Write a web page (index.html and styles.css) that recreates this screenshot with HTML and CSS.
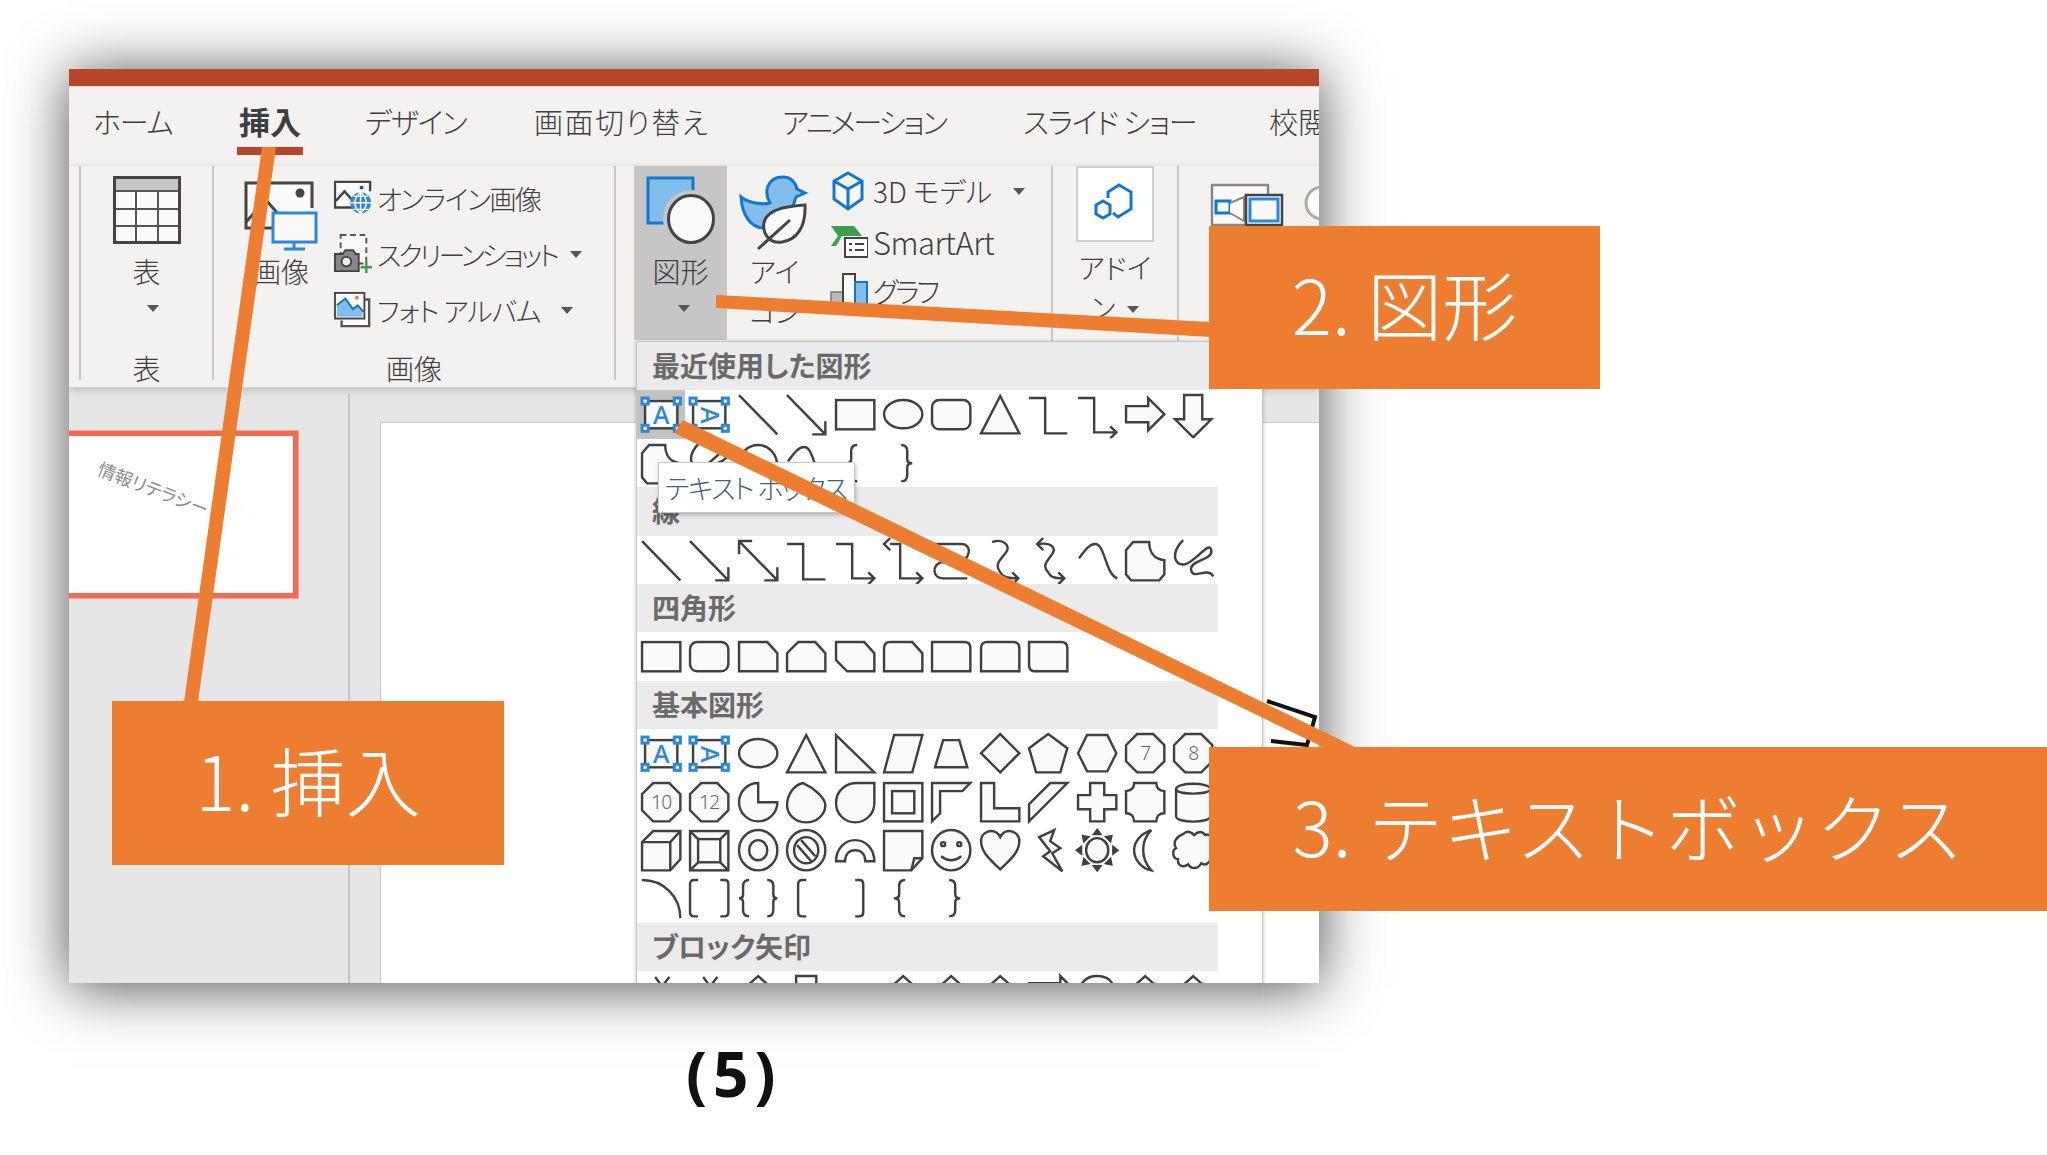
FILE: index.html
```html
<!DOCTYPE html>
<html lang="ja">
<head>
  <meta charset="UTF-8" />
  <title>図形 テキストボックス</title>
  <link rel="stylesheet" href="styles.css">
</head>

<body>
  <!-- shape gallery icons, reused below -->
  <svg class="defs" xmlns="http://www.w3.org/2000/svg">
    <symbol id="tb" viewBox="0 0 48 48">
      <rect x="8" y="11" width="32" height="27"/>
      <text x="24" y="34" text-anchor="middle" font-size="25" font-weight="500" fill="#2b88d8" stroke="none" font-family="Noto Sans">A</text>
      <g fill="#fff" stroke="#2b88d8" stroke-width="3"><rect x="5" y="8" width="6" height="6"/><rect x="37" y="8" width="6" height="6"/><rect x="5" y="35" width="6" height="6"/><rect x="37" y="35" width="6" height="6"/></g>
    </symbol>
    <symbol id="tbv" viewBox="0 0 48 48">
      <rect x="8" y="11" width="32" height="27"/>
      <text x="24" y="33" text-anchor="middle" font-size="25" font-weight="500" fill="#2b88d8" stroke="none" font-family="Noto Sans" transform="rotate(90 24 25)">A</text>
      <g fill="#fff" stroke="#2b88d8" stroke-width="3"><rect x="5" y="8" width="6" height="6"/><rect x="37" y="8" width="6" height="6"/><rect x="5" y="35" width="6" height="6"/><rect x="37" y="35" width="6" height="6"/></g>
    </symbol>
    <symbol id="line" viewBox="0 0 48 48"><path fill="none" d="M5 5L43 44"/></symbol>
    <symbol id="arrow" viewBox="0 0 48 48"><path fill="none" d="M5 5L43 44M43 31V44H30"/></symbol>
    <symbol id="arrow2" viewBox="0 0 48 48"><path fill="none" d="M5 5L43 44M43 31V44H30M5 18V5H18"/></symbol>
    <symbol id="rect" viewBox="0 0 48 48"><rect x="5" y="10" width="38" height="29"/></symbol>
    <symbol id="oval" viewBox="0 0 48 48"><ellipse cx="24" cy="24" rx="19" ry="14"/></symbol>
    <symbol id="round" viewBox="0 0 48 48"><rect x="5" y="10" width="38" height="29" rx="7"/></symbol>
    <symbol id="tri" viewBox="0 0 48 48"><path d="M24 6L43 43H5Z"/></symbol>
    <symbol id="rtri" viewBox="0 0 48 48"><path d="M5 6L43 43H5Z"/></symbol>
    <symbol id="elbow" viewBox="0 0 48 48"><path fill="none" d="M5 8H21V43H43"/></symbol>
    <symbol id="elbowa" viewBox="0 0 48 48"><path fill="none" d="M5 8H21V42H42M37 36L43 42L37 48"/></symbol>
    <symbol id="elbowb" viewBox="0 0 48 48"><path fill="none" d="M11 8H21V42H42M37 36L43 42L37 48M11 2L5 8L11 14"/></symbol>
    <symbol id="rarrow" viewBox="0 0 48 48"><path d="M5 16H27V8L43 24L27 40V32H5Z"/></symbol>
    <symbol id="darrow" viewBox="0 0 48 48"><path d="M15 5H33V29H42L24 47L6 29H15Z"/></symbol>
    <symbol id="free" viewBox="0 0 48 48"><path d="M12 6H28C28 16 33 23 43 24V38L38 44H10L5 38V14Z"/></symbol>
    <symbol id="scrib" viewBox="0 0 48 48"><path fill="none" d="M14 4C2 16 4 30 16 28C26 26 40 4 42 14C44 24 20 24 22 34C24 44 38 30 44 40"/></symbol>
    <symbol id="arcd" viewBox="0 0 48 48"><path fill="none" d="M5 44V24C5 14 14 6 24 6C34 6 43 14 43 28M5 44H30"/></symbol>
    <symbol id="bump" viewBox="0 0 48 48"><path fill="none" d="M6 22C12 14 16 8 22 8C32 8 32 38 44 42"/></symbol>
    <symbol id="conn" viewBox="0 0 48 48"><path fill="none" d="M6 8H34C44 8 44 20 34 26H14C4 30 6 42 16 42H40"/></symbol>
    <symbol id="conna" viewBox="0 0 48 48"><path fill="none" d="M16 6C28 2 34 10 30 16C24 24 18 28 24 36C26 40 30 42 42 42M36 36L42 42L36 48"/></symbol>
    <symbol id="connb" viewBox="0 0 48 48"><path fill="none" d="M14 8C28 6 32 12 28 18C22 26 18 30 24 36C26 40 28 42 40 42M34 36L40 42L34 48M19 2L13 8L19 14"/></symbol>
    <symbol id="snip1" viewBox="0 0 48 48"><path d="M5 10H33L43 21V39H5Z"/></symbol>
    <symbol id="snip2" viewBox="0 0 48 48"><path d="M16 10H33L43 21V39H5V21Z"/></symbol>
    <symbol id="snipd" viewBox="0 0 48 48"><path d="M5 10H33L43 21V39H16L5 28Z"/></symbol>
    <symbol id="snipr" viewBox="0 0 48 48"><path d="M11 10H33L43 21V39H5V16Q5 10 11 10Z"/></symbol>
    <symbol id="round1" viewBox="0 0 48 48"><path d="M5 10H37Q43 10 43 16V39H5Z"/></symbol>
    <symbol id="round2" viewBox="0 0 48 48"><path d="M11 10H37Q43 10 43 16V39H5V16Q5 10 11 10Z"/></symbol>
    <symbol id="roundd" viewBox="0 0 48 48"><path d="M5 10H37Q43 10 43 16V39H11Q5 39 5 33Z"/></symbol>
    <symbol id="para" viewBox="0 0 48 48"><path d="M15 6H43L33 43H5Z"/></symbol>
    <symbol id="trap" viewBox="0 0 48 48"><path d="M16 11H32L40 38H8Z"/></symbol>
    <symbol id="dia" viewBox="0 0 48 48"><path d="M24 5L43 24L24 43L5 24Z"/></symbol>
    <symbol id="pent" viewBox="0 0 48 48"><path d="M24 5L43 19L36 43H12L5 19Z"/></symbol>
    <symbol id="hex" viewBox="0 0 48 48"><path d="M14 6H34L43 24L34 42H14L5 24Z"/></symbol>
    <symbol id="oct" viewBox="0 0 48 48"><path d="M16 5H32L43 16V32L32 43H16L5 32V16Z"/></symbol>
    <symbol id="pie" viewBox="0 0 48 48"><path d="M24 5A19 19 0 1 0 43 24H24Z"/></symbol>
    <symbol id="tear" viewBox="0 0 48 48"><path d="M21 5C32 10 43 20 43 27A19 17 0 0 1 5 27C5 16 12 7 21 5Z"/></symbol>
    <symbol id="tear2" viewBox="0 0 48 48"><path d="M43 5V25A19 19 0 0 1 5 25C5 13 14 5 26 5Z"/></symbol>
    <symbol id="frame" viewBox="0 0 48 48"><rect x="5" y="5" width="38" height="38"/><rect x="13" y="13" width="22" height="22"/></symbol>
    <symbol id="half" viewBox="0 0 48 48"><path d="M5 5H43L35 13H13V35L5 43Z"/></symbol>
    <symbol id="ell" viewBox="0 0 48 48"><path d="M5 5H18V30H43V43H5Z"/></symbol>
    <symbol id="stripe" viewBox="0 0 48 48"><path d="M5 43V26L26 5H43Z"/></symbol>
    <symbol id="cross" viewBox="0 0 48 48"><path d="M17 5H31V17H43V31H31V43H17V31H5V17H17Z"/></symbol>
    <symbol id="plaque" viewBox="0 0 48 48"><path d="M13 5H35C35 10 38 13 43 13V35C38 35 35 38 35 43H13C13 38 10 35 5 35V13C10 13 13 10 13 5Z"/></symbol>
    <symbol id="can" viewBox="0 0 48 48"><path d="M7 11C7 4 41 4 41 11V38C41 45 7 45 7 38Z"/><path fill="none" d="M7 11C7 17 41 17 41 11"/></symbol>
    <symbol id="cube" viewBox="0 0 48 48"><path d="M5 16L16 5H43V33L33 44H5Z"/><path fill="none" d="M5 16H33V44M33 16L43 5"/></symbol>
    <symbol id="bevel" viewBox="0 0 48 48"><rect x="5" y="5" width="38" height="39"/><rect x="13" y="13" width="22" height="23"/><path fill="none" d="M5 5L13 13M43 5L35 13M5 44L13 36M43 44L35 36"/></symbol>
    <symbol id="donut" viewBox="0 0 48 48"><ellipse cx="24" cy="24" rx="19" ry="20"/><ellipse cx="24" cy="24" rx="9" ry="10"/></symbol>
    <symbol id="nosym" viewBox="0 0 48 48"><ellipse cx="24" cy="24" rx="19" ry="20"/><ellipse cx="24" cy="24" rx="12" ry="13"/><path fill="none" d="M15 19L29 35M19 14L33 30"/></symbol>
    <symbol id="barc" viewBox="0 0 48 48"><path d="M5 35C5 22 14 14 24 14C34 14 43 22 43 35H34C34 28 30 24 24 24C18 24 14 28 14 35Z"/></symbol>
    <symbol id="fold" viewBox="0 0 48 48"><path d="M5 5H43V32L32 44H5Z"/><path fill="none" d="M43 32H35L32 44"/></symbol>
    <symbol id="smile" viewBox="0 0 48 48"><ellipse cx="24" cy="24" rx="19" ry="20"/><circle cx="16" cy="18" r="2"/><circle cx="32" cy="18" r="2"/><path fill="none" d="M14 30Q24 38 34 30"/></symbol>
    <symbol id="heart" viewBox="0 0 48 48"><path d="M24 43C10 30 5 24 5 15C5 8 11 5 15 5C19 5 22 7 24 11C26 7 29 5 33 5C37 5 43 8 43 15C43 24 38 30 24 43Z"/></symbol>
    <symbol id="bolt" viewBox="0 0 48 48"><path d="M15 11L30 4L26 15L36 22L28 27L38 45L19 30L26 25Z"/></symbol>
    <symbol id="sun" viewBox="0 0 48 48"><ellipse cx="24" cy="24" rx="11" ry="12"/><path fill="#444" d="M24 4L21 8H27ZM24 44L21 40H27ZM4 24L8 21V27ZM44 24L40 21V27ZM10 10L15 11L11 15ZM38 10L33 11L37 15ZM10 38L15 37L11 33ZM38 38L33 37L37 33Z"/></symbol>
    <symbol id="moon" viewBox="0 0 48 48"><path d="M30 4C18 8 13 17 13 24C13 32 19 42 30 44C24 37 22 30 22 24C22 17 24 10 30 4Z"/></symbol>
    <symbol id="cloud" viewBox="0 0 48 48"><path d="M14 8C18 4 22 6 25 9C29 5 33 5 36 9C40 7 44 12 42 17C46 20 46 28 41 30C42 36 36 40 32 37C29 43 22 43 19 38C14 42 8 39 9 33C3 32 3 24 7 22C3 16 8 10 14 8Z"/></symbol>
    <symbol id="qarc" viewBox="0 0 48 48"><path fill="none" d="M5 6C26 6 43 22 43 44"/></symbol>
    <symbol id="dbrk" viewBox="0 0 48 48"><path fill="none" d="M13 6H9Q5 6 5 10V38Q5 42 9 42H13M35 6H39Q43 6 43 10V38Q43 42 39 42H35"/></symbol>
    <symbol id="dbrc" viewBox="0 0 48 48"><path fill="none" d="M15 6Q9 6 9 12V20Q9 24 5 24Q9 24 9 28V36Q9 42 15 42M33 6Q39 6 39 12V20Q39 24 43 24Q39 24 39 28V36Q39 42 33 42"/></symbol>
    <symbol id="lbrk" viewBox="0 0 48 48"><path fill="none" d="M24 6H20Q16 6 16 10V38Q16 42 20 42H24"/></symbol>
    <symbol id="rbrk" viewBox="0 0 48 48"><path fill="none" d="M24 6H28Q32 6 32 10V38Q32 42 28 42H24"/></symbol>
    <symbol id="lbrc" viewBox="0 0 48 48"><path fill="none" d="M26 6Q20 6 20 12V20Q20 24 15 24Q20 24 20 28V36Q20 42 26 42"/></symbol>
    <symbol id="rbrc" viewBox="0 0 48 48"><path fill="none" d="M22 6Q28 6 28 12V20Q28 24 33 24Q28 24 28 28V36Q28 42 22 42"/></symbol>
    <symbol id="tip" viewBox="0 0 48 48"><path d="M14 14L24 5L34 14V30H14Z"/></symbol>
    <symbol id="box" viewBox="0 0 48 48"><path d="M14 30V5H34V30Z"/></symbol>
    <symbol id="swoop" viewBox="0 0 48 48"><path fill="none" d="M18 6L24 14M32 6L26 14"/></symbol>
    <symbol id="barr" viewBox="0 0 48 48"><path d="M5 12H36V5L43 12V30H5Z"/></symbol>
    <symbol id="dome" viewBox="0 0 48 48"><path d="M5 30C5 10 14 5 24 5C34 5 43 10 43 30Z"/></symbol>
  </svg>

  <div class="window">
    <div class="titlebar"></div>

    <!-- TABS -->
    <div class="tabs">
      <span class="tab tab-tight">ホーム</span>
      <span class="tab tab-on">挿入</span>
      <span class="tab tab-tight">デザイン</span>
      <span class="tab tab-wide">画面切り替え</span>
      <span class="tab tab-tighter">アニメーション</span>
      <span class="tab tab-tight">スライド ショー</span>
      <span class="tab">校閲</span>
    </div>

    <!-- RIBBON -->
    <div class="ribbon">
      <div class="group group-table">
        <div class="group-body">
          <div class="big big-table">
            <div class="big-ico">
              <svg width="68" height="68" viewBox="0 0 68 68">
                <rect x="1.5" y="1.5" width="65" height="65" fill="#fafafa" stroke="#444" stroke-width="3"/>
                <rect x="3" y="3" width="62" height="11" fill="#c6c6c6"/>
                <path d="M3 15H65M3 33H65M3 50H65M23 15V65M45 15V65" stroke="#555" stroke-width="2" fill="none"/>
              </svg>
            </div>
            <div class="big-label">表</div>
            <i class="caret"></i>
          </div>
        </div>
        <div class="group-label">表</div>
      </div>

      <div class="group group-image">
        <div class="group-body">
          <div class="big big-image">
            <div class="big-ico">
              <svg width="74" height="68" viewBox="0 0 74 68">
                <path d="M30 52H2V7H68V32" fill="#fafafa" stroke="#444" stroke-width="3"/>
                <circle cx="56" cy="17" r="4.5" fill="#444"/>
                <path d="M2 46L22 24L36 40" fill="none" stroke="#444" stroke-width="3"/>
                <rect x="29" y="37" width="43" height="29" fill="#fafafa" stroke="#2b88d8" stroke-width="3"/>
                <path d="M50 66V72M40 73H61" stroke="#2b88d8" stroke-width="3"/>
              </svg>
            </div>
            <div class="big-label">画像</div>
          </div>
          <div class="smalls">
            <div class="small">
              <svg class="small-ico" width="40" height="38" viewBox="0 0 40 38">
                <path d="M24 29H1V2H38V12" fill="#fafafa" stroke="#444" stroke-width="2.5"/>
                <circle cx="29" cy="8" r="2" fill="#444"/>
                <path d="M2 22L11 12L20 22" fill="none" stroke="#444" stroke-width="2.5"/>
                <circle cx="28" cy="24" r="11" fill="#2b88d8"/>
                <path d="M17 24H39M28 13V35M20 17H36M20 31H36M28 13C20 20 20 28 28 35C36 28 36 20 28 13" fill="none" stroke="#fff" stroke-width="1.5"/>
              </svg>
              <span class="small-text tight-2">オンライン画像</span>
            </div>
            <div class="small">
              <svg class="small-ico" width="40" height="44" viewBox="0 0 40 44">
                <rect x="7" y="2" width="27" height="30" fill="#fafafa" stroke="#555" stroke-width="2" stroke-dasharray="6 4"/>
                <path d="M1 22H9L12 18H20L23 22H26V40H1Z" fill="#888" stroke="#444" stroke-width="2"/>
                <circle cx="13" cy="30" r="5" fill="#eee" stroke="#444" stroke-width="2"/>
                <path d="M34 30V42M28 36H40" stroke="#3c9e4a" stroke-width="2.5"/>
              </svg>
              <span class="small-text tight-3">スクリーンショット</span><i class="caret"></i>
            </div>
            <div class="small">
              <svg class="small-ico" width="40" height="38" viewBox="0 0 40 38">
                <path d="M8 30V36H37V8H32" fill="#fafafa" stroke="#555" stroke-width="2.5"/>
                <rect x="1" y="1" width="31" height="27" fill="#fafafa" stroke="#444" stroke-width="2"/>
                <path d="M3 26V13L12 7L20 18L25 14L30 20V26Z" fill="#83bdec"/>
                <path d="M3 14L12 7L20 18L25 14L31 21" fill="none" stroke="#1b6db5" stroke-width="2"/>
                <circle cx="24" cy="6" r="2" fill="#ed7d31"/>
              </svg>
              <span class="small-text tight-1">フォト アルバム</span><i class="caret"></i>
            </div>
          </div>
        </div>
        <div class="group-label">画像</div>
      </div>

      <div class="group group-draw">
        <div class="group-body">
          <div class="big big-shape">
            <div class="big-ico">
              <svg width="72" height="70" viewBox="0 0 72 70">
                <rect x="3" y="2" width="45" height="45" fill="#83bdec" stroke="#1277d1" stroke-width="3"/>
                <ellipse cx="46" cy="43" rx="24" ry="25" fill="#fafafa" stroke="#c6c6c6" stroke-width="8"/>
                <ellipse cx="46" cy="43" rx="22.5" ry="23.5" fill="#fafafa" stroke="#444" stroke-width="3"/>
              </svg>
            </div>
            <div class="big-label">図形</div>
            <i class="caret"></i>
          </div>
          <div class="big big-icon">
            <div class="big-ico">
              <svg width="70" height="76" viewBox="0 0 70 76">
                <path d="M1 21C8 27 24 29 30 27C26 20 26 15 28 10C31 3 37 1 43 1C51 1 56 7 57 13L65 17L56 21C54 30 48 38 40 44L24 52C10 52 2 38 1 21Z" fill="#83bdec" stroke="#1277d1" stroke-width="3"/>
                <path d="M65 29C50 30 28 32 24 46C22 58 30 68 42 66C56 64 66 52 65 29Z" fill="#fafafa" stroke="#444" stroke-width="3"/>
                <path d="M50 44L18 73" fill="none" stroke="#444" stroke-width="3"/>
              </svg>
            </div>
            <div class="big-label">アイ<br>コン</div>
          </div>
          <div class="smalls smalls-draw">
            <div class="small">
              <svg class="small-ico" width="38" height="40" viewBox="0 0 38 40">
                <path d="M18 2L32 10V28L18 38L4 28V10Z M4 10L18 18L32 10M18 18V38" fill="#fafafa" stroke="#1277d1" stroke-width="3"/>
              </svg>
              <span class="small-text">3D モデル</span><i class="caret"></i>
            </div>
            <div class="small">
              <svg class="small-ico" width="38" height="34" viewBox="0 0 38 34">
                <path d="M1 22L8 12L1 2H24L32 12H12L6 22Z" fill="#3c9e4a"/>
                <rect x="15" y="14" width="23" height="19" fill="#fafafa" stroke="#444" stroke-width="2"/>
                <path d="M19 20H22M25 20H34M19 26H22M25 26H34" stroke="#444" stroke-width="2"/>
              </svg>
              <span class="small-text text-latin">SmartArt</span>
            </div>
            <div class="small">
              <svg class="small-ico" width="38" height="38" viewBox="0 0 38 38">
                <rect x="1" y="20" width="12" height="17" fill="#bbb" stroke="#777" stroke-width="1.5"/>
                <rect x="13" y="2" width="12" height="35" fill="#fafafa" stroke="#444" stroke-width="2"/>
                <rect x="25" y="10" width="12" height="27" fill="#83bdec" stroke="#1277d1" stroke-width="2"/>
              </svg>
              <span class="small-text tight-4">グラフ</span>
            </div>
          </div>
        </div>
      </div>

      <div class="group group-addin">
        <div class="group-body">
          <div class="big big-addin">
            <div class="addin-box">
              <svg width="42" height="42" viewBox="0 0 42 42">
                <path d="M14 15V9L25 2L37 9V26L24 34L19 30" fill="none" stroke="#1277d1" stroke-width="3"/>
                <path d="M9 18L16 22V31L9 35L2 31V22Z" fill="none" stroke="#1277d1" stroke-width="3"/>
              </svg>
            </div>
            <div class="big-label">アドイ</div>
            <div class="big-label">ン<i class="caret caret-inline"></i></div>
          </div>
        </div>
      </div>

      <div class="group group-media">
        <div class="group-body">
          <svg class="media-ico" width="132" height="48" viewBox="0 0 132 48">
            <path d="M2 2H58V14L46 14V42H2Z" fill="#fafafa" stroke="#888" stroke-width="2.5"/>
            <rect x="6" y="18" width="14" height="12" fill="#fafafa" stroke="#1277d1" stroke-width="3"/>
            <path d="M20 20L34 14V38L20 30" fill="#fafafa" stroke="#888" stroke-width="2"/>
            <rect x="36" y="12" width="36" height="30" fill="#fafafa" stroke="#444" stroke-width="2.5"/>
            <rect x="40" y="16" width="28" height="22" fill="#fafafa" stroke="#2b88d8" stroke-width="3"/>
            <circle cx="112" cy="20" r="16" fill="#fafafa" stroke="#aaa" stroke-width="3"/>
          </svg>
        </div>
      </div>
    </div>

    <!-- SLIDES PANE + SLIDE -->
    <div class="workarea">
      <div class="sidepane">
        <div class="thumb">
          <div class="thumb-text">情報リテラシー</div>
        </div>
      </div>
      <div class="stage">
        <div class="slide"></div>
      </div>
    </div>

    <!-- SHAPES DROPDOWN -->
    <div class="menu">
      <div class="menu-head">最近使用した図形</div>
      <div class="shapes">
        <svg class="sh sh-hot"><use href="#tb"/></svg><svg class="sh"><use href="#tbv"/></svg><svg class="sh"><use href="#line"/></svg><svg class="sh"><use href="#arrow"/></svg><svg class="sh"><use href="#rect"/></svg><svg class="sh"><use href="#oval"/></svg><svg class="sh"><use href="#round"/></svg><svg class="sh"><use href="#tri"/></svg><svg class="sh"><use href="#elbow"/></svg><svg class="sh"><use href="#elbowa"/></svg><svg class="sh"><use href="#rarrow"/></svg><svg class="sh"><use href="#darrow"/></svg>
        <svg class="sh"><use href="#free"/></svg><svg class="sh"><use href="#scrib"/></svg><svg class="sh"><use href="#arcd"/></svg><svg class="sh"><use href="#bump"/></svg><svg class="sh"><use href="#lbrc"/></svg><svg class="sh"><use href="#rbrc"/></svg>
      </div>

      <div class="menu-head">線</div>
      <div class="shapes">
        <svg class="sh"><use href="#line"/></svg><svg class="sh"><use href="#arrow"/></svg><svg class="sh"><use href="#arrow2"/></svg><svg class="sh"><use href="#elbow"/></svg><svg class="sh"><use href="#elbowa"/></svg><svg class="sh"><use href="#elbowb"/></svg><svg class="sh"><use href="#conn"/></svg><svg class="sh"><use href="#conna"/></svg><svg class="sh"><use href="#connb"/></svg><svg class="sh"><use href="#bump"/></svg><svg class="sh"><use href="#free"/></svg><svg class="sh"><use href="#scrib"/></svg>
      </div>

      <div class="menu-head">四角形</div>
      <div class="shapes">
        <svg class="sh"><use href="#rect"/></svg><svg class="sh"><use href="#round"/></svg><svg class="sh"><use href="#snip1"/></svg><svg class="sh"><use href="#snip2"/></svg><svg class="sh"><use href="#snipd"/></svg><svg class="sh"><use href="#snipr"/></svg><svg class="sh"><use href="#round1"/></svg><svg class="sh"><use href="#round2"/></svg><svg class="sh"><use href="#roundd"/></svg>
      </div>

      <div class="menu-head">基本図形</div>
      <div class="shapes">
        <svg class="sh"><use href="#tb"/></svg><svg class="sh"><use href="#tbv"/></svg><svg class="sh"><use href="#oval"/></svg><svg class="sh"><use href="#tri"/></svg><svg class="sh"><use href="#rtri"/></svg><svg class="sh"><use href="#para"/></svg><svg class="sh"><use href="#trap"/></svg><svg class="sh"><use href="#dia"/></svg><svg class="sh"><use href="#pent"/></svg><svg class="sh"><use href="#hex"/></svg>
        <svg class="sh" viewBox="0 0 48 48"><use href="#oct" width="48" height="48"/><text class="sh-num" x="24" y="31">7</text></svg><svg class="sh" viewBox="0 0 48 48"><use href="#oct" width="48" height="48"/><text class="sh-num" x="24" y="31">8</text></svg>
        <svg class="sh" viewBox="0 0 48 48"><use href="#oct" width="48" height="48"/><text class="sh-num" x="24" y="31">10</text></svg><svg class="sh" viewBox="0 0 48 48"><use href="#oct" width="48" height="48"/><text class="sh-num" x="24" y="31">12</text></svg>
        <svg class="sh"><use href="#pie"/></svg><svg class="sh"><use href="#tear"/></svg><svg class="sh"><use href="#tear2"/></svg><svg class="sh"><use href="#frame"/></svg><svg class="sh"><use href="#half"/></svg><svg class="sh"><use href="#ell"/></svg><svg class="sh"><use href="#stripe"/></svg><svg class="sh"><use href="#cross"/></svg><svg class="sh"><use href="#plaque"/></svg><svg class="sh"><use href="#can"/></svg>
        <svg class="sh"><use href="#cube"/></svg><svg class="sh"><use href="#bevel"/></svg><svg class="sh"><use href="#donut"/></svg><svg class="sh"><use href="#nosym"/></svg><svg class="sh"><use href="#barc"/></svg><svg class="sh"><use href="#fold"/></svg><svg class="sh"><use href="#smile"/></svg><svg class="sh"><use href="#heart"/></svg><svg class="sh"><use href="#bolt"/></svg><svg class="sh"><use href="#sun"/></svg><svg class="sh"><use href="#moon"/></svg><svg class="sh"><use href="#cloud"/></svg>
        <svg class="sh"><use href="#qarc"/></svg><svg class="sh"><use href="#dbrk"/></svg><svg class="sh"><use href="#dbrc"/></svg><svg class="sh"><use href="#lbrk"/></svg><svg class="sh"><use href="#rbrk"/></svg><svg class="sh"><use href="#lbrc"/></svg><svg class="sh"><use href="#rbrc"/></svg>
      </div>

      <div class="menu-head">ブロック矢印</div>
      <div class="shapes">
        <svg class="sh"><use href="#swoop"/></svg><svg class="sh"><use href="#swoop"/></svg><svg class="sh"><use href="#tip"/></svg><svg class="sh"><use href="#box"/></svg><span></span><svg class="sh"><use href="#tip"/></svg><svg class="sh"><use href="#tip"/></svg><svg class="sh"><use href="#tip"/></svg><svg class="sh"><use href="#barr"/></svg><svg class="sh"><use href="#dome"/></svg><svg class="sh"><use href="#tip"/></svg><svg class="sh"><use href="#tip"/></svg>
      </div>

      <div class="tooltip">テキスト ボックス</div>
    </div>

    <!-- text box being dragged on the slide -->
    <svg class="drawn" width="60" height="56" viewBox="0 0 60 56">
      <path d="M4 6L52 22L44 50L8 46" fill="none" stroke="#111" stroke-width="4"/>
    </svg>
  </div>

  <div class="caption">(5)</div>

  <!-- ANNOTATIONS -->
  <svg class="leaders" width="2047" height="1155" viewBox="0 0 2047 1155">
    <polygon points="262,147 276,147 198,702 184,702"/>
    <polygon points="716,295 716,308 1210,337 1210,322"/>
    <polygon points="683,420 674,433 1325,748 1357,748"/>
  </svg>
  <div class="callout callout-1">1. 挿入</div>
  <div class="callout callout-2">2. 図形</div>
  <div class="callout callout-3">3. テキストボックス</div>
</body>
</html>
```

FILE: styles.css
```css
/* Reset */
* {
  margin: 0;
  padding: 0;
  box-sizing: border-box;
}

html,
body {
  height: 100%;
  overflow: hidden;
  background: #fff;
  color: #3e3e3e;
  font-family: "Noto Sans CJK JP", "Noto Sans", sans-serif;
  font-feature-settings: "palt";
}

body {
  padding: 69px 0 0 69px;
}

.defs {
  display: none;
}

/* 1) SCREENSHOT WINDOW */
.window {
  position: relative;
  width: 1250px;
  height: 914px;
  overflow: hidden;
  background: #e6e6e6;
  box-shadow: 0 4px 55px rgba(0, 0, 0, 0.7);
  display: flex;
  flex-direction: column;
}

.titlebar {
  height: 18px;
  flex: none;
  background: #b7472a;
  border-bottom: 1px solid #f0d9d2;
}

/* 2) TABS */
.tabs {
  flex: none;
  height: 79px;
  padding: 15px 0 0 24px;
  background: #f3f2f1;
  display: grid;
  grid-template-columns: 144px 128px 169px 248px 241px 246px 80px;
  font-size: 29px;
  font-weight: 300;
  white-space: nowrap;
}

.tab {
  height: 60px;
  line-height: 38px;
}

.tab-tight { letter-spacing: -1.2px; }
.tab-tighter { letter-spacing: -2.4px; }
.tab-wide { letter-spacing: 1.5px; }

.tab-on {
  width: 66px;
  font-size: 31px;
  font-weight: 700;
  border-bottom: 8px solid #b7472a;
  height: 53px;
  text-align: center;
}

/* 3) RIBBON */
.ribbon {
  flex: none;
  height: 222px;
  padding: 0 0 7px 10px;
  background: #f3f2f1;
  display: flex;
  border-bottom: 1px solid #d4d4d4;
  box-shadow: 0 2px 8px rgba(0, 0, 0, 0.18);
  position: relative;
  font-size: 28px;
  font-weight: 300;
  white-space: nowrap;
}

.group {
  height: 214px;
  flex: none;
  border-left: 2px solid #c8c8c8;
  display: flex;
  flex-direction: column;
}

.group-table { width: 133px; }
.group-image { width: 402px; }
.group-draw { width: 437px; }
.group-addin { width: 126px; }
.group-media { width: 150px; }

.group-body {
  flex: 1;
  display: flex;
  align-items: flex-start;
}

.group-label {
  text-align: center;
  line-height: 36px;
  margin-bottom: -6px;
}

.big {
  flex: none;
  display: flex;
  flex-direction: column;
  align-items: center;
}

.big-ico {
  height: 85px;
  padding-top: 10px;
}

.big-ico svg {
  display: block;
  overflow: visible;
}

.big-label {
  line-height: 40px;
  text-align: center;
}

.big-table { width: 131px; }
.big-table .caret { margin: 14px 0 0 12px; }

.big-image {
  width: 98px;
  margin-left: 18px;
}

.big-shape {
  width: 93px;
  margin-left: 18px;
  height: 174px;
  background: #c6c6c6;
}

.big-shape .caret { margin: 14px 0 0 6px; }

.big-icon { width: 95px; }

.big-addin {
  width: 78px;
  margin-left: 23px;
}

.addin-box {
  width: 78px;
  height: 76px;
  background: #fff;
  border: 2px solid #cfcfcf;
  display: flex;
  align-items: center;
  justify-content: center;
  margin-bottom: 5px;
}

.media-ico {
  margin: 17px 0 0 31px;
  overflow: visible;
}

/* small buttons, three to a column */
.smalls {
  margin: 4px 0 0 4px;
  display: flex;
  flex-direction: column;
  font-size: 27px;
}

.small {
  height: 56px;
  display: flex;
  align-items: center;
  gap: 5px;
}

.smalls-draw {
  margin: 0 0 0 8px;
  font-size: 28px;
}

.smalls-draw .small {
  height: 50px;
}

.small-ico {
  flex: none;
  width: 38px;
}

.small-text {
  margin-right: 16px;
}

.tight-1 { letter-spacing: -1px; }
.tight-2 { letter-spacing: -1.5px; }
.tight-3 { letter-spacing: -3px; margin-right: 8px; }
.tight-4 { letter-spacing: -3px; }
.text-latin { font-size: 31px; letter-spacing: -0.5px; }

.caret {
  display: block;
  width: 0;
  height: 0;
  border-left: 6px solid transparent;
  border-right: 6px solid transparent;
  border-top: 7px solid #555;
}

.caret-inline {
  display: inline-block;
  margin-left: 12px;
  vertical-align: 6px;
}

/* 4) WORK AREA */
.workarea {
  flex: 1;
  display: flex;
  min-height: 0;
}

.sidepane {
  width: 281px;
  flex: none;
  margin-top: 6px;
  border-right: 2px solid #c6c6c6;
  padding-top: 37px;
}

.thumb {
  width: 229px;
  height: 167px;
  background: #fff;
  border: 5px solid #f26b50;
  border-left: none;
  box-shadow: 0 0 0 1px #f3a594;
  overflow: hidden;
}

.thumb-text {
  margin: 18px 0 0 30px;
  font-size: 18px;
  color: #8c8c8c;
  white-space: nowrap;
  transform: rotate(21deg);
  transform-origin: left center;
}

.stage {
  flex: 1;
  padding: 34px 0 0 30px;
}

.slide {
  height: 100%;
  background: #fff;
  border-top: 1px solid #c8c8c8;
  border-left: 1px solid #c8c8c8;
}

/* 5) SHAPES DROPDOWN */
.menu {
  position: absolute;
  left: 567px;
  top: 272px;
  width: 627px;
  height: 700px;
  background: #fff;
  border: 1px solid #c6c6c6;
  box-shadow: 0 1px 4px rgba(0, 0, 0, 0.25);
}

.menu-head {
  width: 581px;
  height: 48.4px;
  padding-left: 15px;
  background: #ebebeb;
  font-size: 28px;
  font-weight: 700;
  line-height: 46px;
  color: #6a6a6a;
}

.shapes {
  width: 581px;
  display: grid;
  grid-template-columns: repeat(12, 48.4px);
  grid-auto-rows: 48.4px;
}

.sh {
  display: block;
  width: 48.4px;
  height: 48.4px;
  fill: #fafafa;
  stroke: #404040;
  stroke-width: 2.4;
}

.sh-hot {
  background: #c2c2c2;
}

.sh-num {
  font-family: "Noto Sans", sans-serif;
  font-size: 19px;
  font-weight: 300;
  text-anchor: middle;
  fill: #666;
  stroke: none;
  letter-spacing: -1px;
}

.tooltip {
  position: absolute;
  left: 21px;
  top: 120px;
  width: 197px;
  height: 51px;
  padding-left: 6px;
  background: #fff;
  border: 1px solid #c8c8c8;
  box-shadow: 1px 2px 4px rgba(0, 0, 0, 0.25);
  font-size: 27px;
  font-weight: 300;
  letter-spacing: -1.5px;
  line-height: 50px;
  color: #45607c;
  white-space: nowrap;
}

.drawn {
  position: absolute;
  left: 1194px;
  top: 626px;
}

/* 6) CAPTION + ANNOTATIONS */
.caption {
  margin: 50px 0 0 617px;
  font-family: "Noto Sans", sans-serif;
  font-size: 62px;
  font-weight: 700;
  letter-spacing: 6px;
  line-height: 80px;
  color: #111;
}

.leaders {
  position: absolute;
  left: 0;
  top: 0;
  fill: #ed7d31;
}

.callout {
  position: absolute;
  display: flex;
  align-items: center;
  justify-content: center;
  padding-bottom: 10px;
  background: #ed7d31;
  color: #fff;
  font-size: 75px;
  font-weight: 300;
  white-space: nowrap;
  font-feature-settings: normal;
}

.callout-1 {
  left: 112px;
  top: 701px;
  width: 392px;
  height: 164px;
}

.callout-2 {
  left: 1209px;
  top: 226px;
  width: 391px;
  height: 163px;
}

.callout-3 {
  left: 1209px;
  top: 747px;
  width: 838px;
  height: 164px;
}
```
